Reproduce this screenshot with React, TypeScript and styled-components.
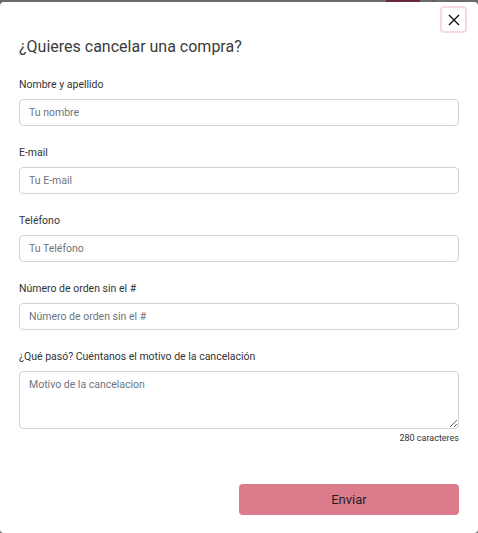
import React from 'react';
import styled, { createGlobalStyle } from 'styled-components';

const GlobalStyle = createGlobalStyle`
  html, body {
    margin: 0;
    padding: 0;
    background: #6b6b6b;
    font-family: Roboto, "Liberation Sans", Arial, sans-serif;
  }
`;

const Backdrop = styled.div`
  width: 478px;
  height: 533px;
  display: flex;
  flex-direction: column;
  overflow: hidden;
`;

const PageStrip = styled.div`
  height: 2px;
  display: flex;
  flex-shrink: 0;

  .accent {
    margin-left: 386px;
    width: 34px;
    background: #6a2a3a;
  }
  .rule {
    margin-left: 13px;
    width: 1px;
    background: #4a4a4a;
  }
`;

const Modal = styled.div`
  flex: 1;
  background: #fff;
  border-radius: 4px;
  padding: 0 19px 18px;
  display: flex;
  flex-direction: column;
`;

const Header = styled.div`
  display: flex;
  justify-content: flex-end;
  padding-top: 4px;
  margin-right: -8px;
`;

const CloseButton = styled.button`
  width: 27px;
  height: 27px;
  border: 2px solid #f7d9e0;
  border-radius: 4px;
  background: #fff;
  padding: 0;
  display: flex;
  align-items: center;
  justify-content: center;
  cursor: pointer;
`;

const Title = styled.h2`
  margin: 3px 0 20px;
  font-size: 16px;
  font-weight: 400;
  color: #3b3b3b;
  line-height: 22px;
`;

const Field = styled.div`
  display: flex;
  flex-direction: column;
  margin-bottom: 20px;
`;

const Label = styled.label`
  font-size: 10.5px;
  color: #333;
  line-height: 14px;
  margin-bottom: 7px;
`;

const Input = styled.input`
  height: 27px;
  box-sizing: border-box;
  border: 1px solid #cfd3d7;
  border-radius: 4px;
  padding: 0 9px;
  font-family: inherit;
  font-size: 10.5px;
  color: #333;

  &::placeholder {
    color: #6f757c;
  }
`;

const TextArea = styled.textarea`
  height: 58px;
  box-sizing: border-box;
  border: 1px solid #cfd3d7;
  border-radius: 4px;
  padding: 6px 9px;
  font-family: inherit;
  font-size: 10.5px;
  color: #333;
  resize: vertical;

  &::placeholder {
    color: #6f757c;
  }
`;

const Counter = styled.div`
  text-align: right;
  font-size: 9px;
  color: #333;
  margin-top: 4px;
`;

const Footer = styled.div`
  margin-top: auto;
  display: flex;
  justify-content: flex-end;
`;

const SubmitButton = styled.button`
  width: 220px;
  height: 31px;
  border: none;
  border-radius: 4px;
  background: #dc7b8c;
  color: #1f1f1f;
  font-family: inherit;
  font-size: 13px;
  cursor: pointer;
`;

const fields = [
  { label: 'Nombre y apellido', placeholder: 'Tu nombre' },
  { label: 'E-mail', placeholder: 'Tu E-mail' },
  { label: 'Teléfono', placeholder: 'Tu Teléfono' },
  { label: 'Número de orden sin el #', placeholder: 'Número de orden sin el #' },
];

export default function App() {
  return (
    <>
      <GlobalStyle />
      <Backdrop>
        <PageStrip>
          <div className="accent" />
          <div className="rule" />
        </PageStrip>
        <Modal>
          <Header>
            <CloseButton aria-label="Cerrar">
              <svg width="12" height="12" viewBox="0 0 12 12">
                <path d="M1 1L11 11M11 1L1 11" stroke="#111" strokeWidth="1.4" />
              </svg>
            </CloseButton>
          </Header>
          <Title>¿Quieres cancelar una compra?</Title>
          {fields.map(f => (
            <Field key={f.label}>
              <Label>{f.label}</Label>
              <Input placeholder={f.placeholder} />
            </Field>
          ))}
          <Field>
            <Label>¿Qué pasó? Cuéntanos el motivo de la cancelación</Label>
            <TextArea placeholder="Motivo de la cancelacion" />
            <Counter>280 caracteres</Counter>
          </Field>
          <Footer>
            <SubmitButton>Enviar</SubmitButton>
          </Footer>
        </Modal>
      </Backdrop>
    </>
  );
}
